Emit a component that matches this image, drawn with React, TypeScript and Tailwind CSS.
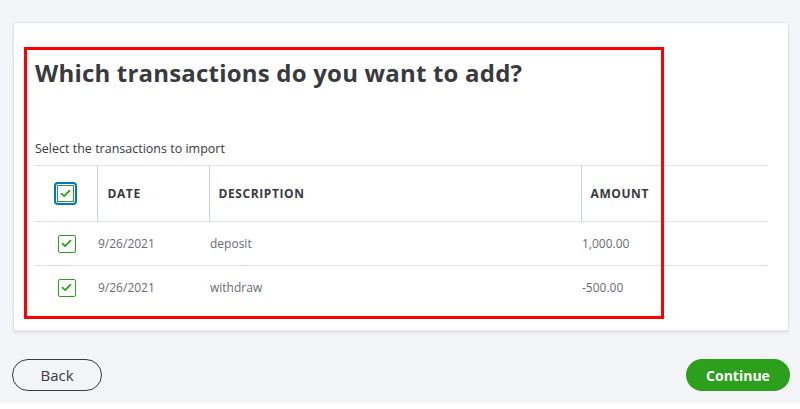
import React from 'react'

const rows = [
  { date: '9/26/2021', description: 'deposit', amount: '1,000.00' },
  { date: '9/26/2021', description: 'withdraw', amount: '-500.00' },
]

function CheckMark() {
  return (
    <svg viewBox="0 0 12 10" className="h-[9px] w-[11px]" fill="none">
      <path d="M1.5 5.2 4.5 8 10.5 1.8" stroke="#2ca01c" strokeWidth="2" strokeLinecap="round" strokeLinejoin="round" />
    </svg>
  )
}

function Checkbox() {
  return (
    <span className="flex h-[18px] w-[18px] items-center justify-center rounded-[2px] border border-[#2ca01c] bg-white">
      <CheckMark />
    </span>
  )
}

export default function App() {
  return (
    <div className="h-[403px] bg-[#f4f5f8] px-[12px] pt-[22px] font-['Open_Sans',sans-serif] text-[#393a3d]">
      <div className="relative ml-px mr-[-1px] h-[309px] w-[776px] rounded-[2px] border border-[#e3e5e8] bg-white shadow-[0_2px_3px_rgba(0,0,0,0.08)]">
        <div className="px-[21px] pt-[34px]">
          <h1 className="text-[24px] font-bold leading-[32px] tracking-[0.2px]">
            Which transactions do you want to add?
          </h1>
          <p className="mt-[51px] text-[12.5px] leading-[18px] text-[#393a3d]">Select the transactions to import</p>

          <table className="mt-[7px] w-[732px] table-fixed border-collapse text-[12px]">
            <colgroup>
              <col className="w-[62px]" />
              <col className="w-[112px]" />
              <col className="w-[372px]" />
              <col className="w-[186px]" />
            </colgroup>
            <thead>
              <tr className="h-[56px] border-y border-[#dcdfe3]">
                <th className="p-0">
                  <div className="flex justify-center">
                    <span className="flex h-[23px] w-[23px] items-center justify-center rounded-[4px] border-2 border-[#0077c5]">
                      <span className="flex h-[17px] w-[17px] items-center justify-center border border-[#2ca01c] bg-white">
                        <CheckMark />
                      </span>
                    </span>
                  </div>
                </th>
                <th className="border-l border-[#c9d3de] pl-[10px] text-left text-[12px] font-bold tracking-[0.6px]">DATE</th>
                <th className="border-l border-[#c9d3de] pl-[9px] text-left text-[12px] font-bold tracking-[0.6px]">DESCRIPTION</th>
                <th className="border-l border-[#c9d3de] pl-[9px] text-left text-[12px] font-bold tracking-[0.6px]">AMOUNT</th>
              </tr>
            </thead>
            <tbody className="text-[#6b6c72]">
              {rows.map((row, i) => (
                <tr key={i} className={i === 0 ? 'h-[44px] border-b border-[#dcdfe3]' : 'h-[44px]'}>
                  <td className="p-0">
                    <div className="flex justify-center pl-[1px]">
                      <Checkbox />
                    </div>
                  </td>
                  <td className="pl-[1px]">{row.date}</td>
                  <td className="pl-[1px]">{row.description}</td>
                  <td className="pl-[1px]">{row.amount}</td>
                </tr>
              ))}
            </tbody>
          </table>
        </div>

        {/* annotation box */}
        <div className="pointer-events-none absolute left-[10px] top-[24px] h-[272px] w-[640px] border-[3px] border-[#ff0000]" />
      </div>

      <div className="mr-[-2px] mt-[28px] flex items-center justify-between">
        <button className="h-[32px] w-[90px] rounded-full border border-[#393a3d] text-[15px] text-[#393a3d]">Back</button>
        <button className="h-[32px] w-[104px] rounded-full bg-[#2ca01c] text-[14px] font-bold text-white">Continue</button>
      </div>
    </div>
  )
}
